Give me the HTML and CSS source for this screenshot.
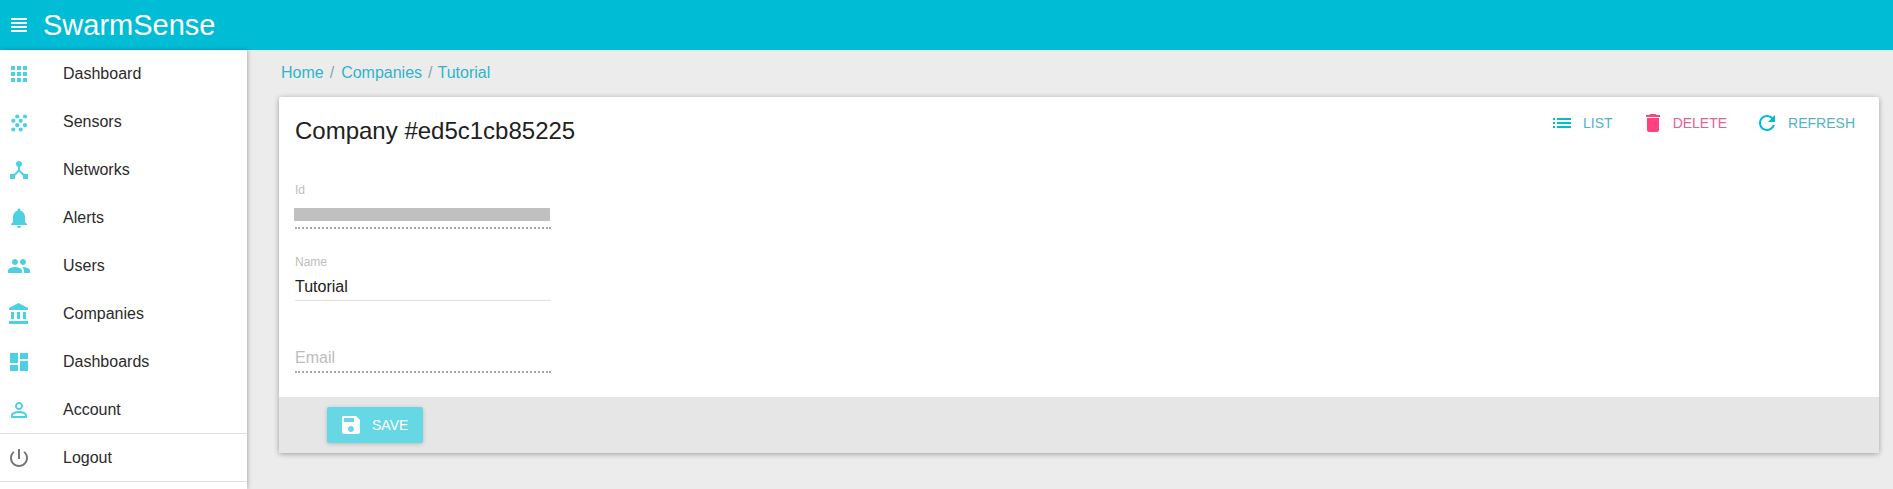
FILE: index.html
```html
<!DOCTYPE html>
<html lang="en">
<head>
    <meta charset="UTF-8">
    <meta name="viewport" content="width=device-width, initial-scale=1.0">
    <title>SwarmSense</title>
    <link rel="stylesheet" href="styles.css">
</head>
<body>
    <header class="app-bar">
        <svg class="icon" viewBox="0 0 24 24"><path d="M4 15h16v-2H4v2zm0 4h16v-2H4v2zm0-8h16V9H4v2zm0-6v2h16V5H4z"/></svg>
        <h1 class="brand">SwarmSense</h1>
    </header>
    <div class="layout">
        <nav class="sidebar">
            <a class="menu-item"><svg class="icon" viewBox="0 0 24 24"><path d="M4 8h4V4H4v4zm6 12h4v-4h-4v4zm-6 0h4v-4H4v4zm0-6h4v-4H4v4zm6 0h4v-4h-4v4zm6-10v4h4V4h-4zm-6 4h4V4h-4v4zm6 6h4v-4h-4v4zm0 6h4v-4h-4v4z"/></svg>Dashboard</a>
            <a class="menu-item"><svg class="icon" viewBox="0 0 24 24"><circle cx="10.3" cy="6.5" r="2.1"/><circle cx="18" cy="6.5" r="2.1"/><circle cx="6.3" cy="10.8" r="2.1"/><circle cx="13.7" cy="10.8" r="2.1"/><circle cx="10.3" cy="15.2" r="2.1"/><circle cx="18" cy="15.2" r="2.1"/><circle cx="6.3" cy="19.5" r="2.1"/><circle cx="13.7" cy="19.5" r="2.1"/></svg>Sensors</a>
            <a class="menu-item"><svg class="icon" viewBox="0 0 24 24"><path d="M17 16l-4-4V8.82C14.16 8.4 15 7.3 15 6c0-1.66-1.34-3-3-3S9 4.34 9 6c0 1.3.84 2.4 2 2.82V12l-4 4H3v5h5v-3.05l4-4.2 4 4.2V21h5v-5h-4z"/></svg>Networks</a>
            <a class="menu-item"><svg class="icon" viewBox="0 0 24 24"><path d="M12 22c1.1 0 2-.9 2-2h-4c0 1.1.89 2 2 2zm6-6v-5c0-3.07-1.64-5.64-4.5-6.32V4c0-.83-.67-1.5-1.5-1.5s-1.5.67-1.5 1.5v.68C7.63 5.36 6 7.92 6 11v5l-2 2v1h16v-1l-2-2z"/></svg>Alerts</a>
            <a class="menu-item"><svg class="icon" viewBox="0 0 24 24"><path d="M16 11c1.66 0 2.99-1.34 2.99-3S17.66 5 16 5c-1.66 0-3 1.34-3 3s1.34 3 3 3zm-8 0c1.66 0 2.99-1.34 2.99-3S9.66 5 8 5C6.34 5 5 6.34 5 8s1.34 3 3 3zm0 2c-2.33 0-7 1.17-7 3.5V19h14v-2.5c0-2.33-4.67-3.5-7-3.5zm8 0c-.29 0-.62.02-.97.05 1.16.84 1.97 1.97 1.97 3.45V19h6v-2.5c0-2.33-4.67-3.5-7-3.5z"/></svg>Users</a>
            <a class="menu-item"><svg class="icon" viewBox="0 0 24 24"><path d="M4 10v7h3v-7H4zm6 0v7h3v-7h-3zM2 22h19v-3H2v3zm14-12v7h3v-7h-3zm-4.5-9L2 6v2h19V6l-9.5-5z"/></svg>Companies</a>
            <a class="menu-item"><svg class="icon" viewBox="0 0 24 24"><path d="M3 13h8V3H3v10zm0 8h8v-6H3v6zm10 0h8V11h-8v10zm0-18v6h8V3h-8z"/></svg>Dashboards</a>
            <a class="menu-item"><svg class="icon" viewBox="0 0 24 24"><path d="M12 5.9c1.16 0 2.1.94 2.1 2.1s-.94 2.1-2.1 2.1S9.9 9.16 9.9 8s.94-2.1 2.1-2.1m0 9c2.97 0 6.1 1.46 6.1 2.1v1.1H5.9V17c0-.64 3.13-2.1 6.1-2.1M12 4C9.79 4 8 5.79 8 8s1.79 4 4 4 4-1.79 4-4-1.79-4-4-4zm0 9c-2.67 0-8 1.34-8 4v3h16v-3c0-2.66-5.33-4-8-4z"/></svg>Account</a>
            <a class="menu-item logout"><svg class="icon" viewBox="0 0 24 24"><path d="M13 3h-2v10h2V3zm4.83 2.17l-1.42 1.42C17.99 7.86 19 9.81 19 12c0 3.87-3.13 7-7 7s-7-3.13-7-7c0-2.19 1.01-4.14 2.58-5.42L6.17 5.17C4.23 6.82 3 9.26 3 12c0 4.97 4.03 9 9 9s9-4.03 9-9c0-2.74-1.23-5.18-3.17-6.83z"/></svg>Logout</a>
        </nav>
        <main class="content">
            <div class="breadcrumbs">
                <a>Home</a><span class="sep">/</span><a>Companies</a><span class="sep sep-last">/</span><a>Tutorial</a>
            </div>
            <section class="card">
                <div class="card-head">
                    <h2 class="card-title">Company #ed5c1cb85225</h2>
                    <div class="actions">
                        <a class="action"><svg class="icon" viewBox="0 0 24 24"><path d="M3 13h2v-2H3v2zm0 4h2v-2H3v2zm0-8h2V7H3v2zm4 4h14v-2H7v2zm0 4h14v-2H7v2zM7 7v2h14V7H7z"/></svg>List</a>
                        <a class="action danger"><svg class="icon" viewBox="0 0 24 24"><path d="M6 19c0 1.1.9 2 2 2h8c1.1 0 2-.9 2-2V7H6v12zM19 4h-3.5l-1-1h-5l-1 1H5v2h14V4z"/></svg>Delete</a>
                        <a class="action"><svg class="icon" viewBox="0 0 24 24"><path d="M17.65 6.35C16.2 4.9 14.21 4 12 4c-4.42 0-7.99 3.58-7.99 8s3.57 8 7.99 8c3.73 0 6.84-2.55 7.73-6h-2.08c-.82 2.33-3.04 4-5.65 4-3.31 0-6-2.69-6-6s2.69-6 6-6c1.66 0 3.14.69 4.22 1.78L13 11h7V4l-2.35 2.35z"/></svg>Refresh</a>
                    </div>
                </div>
                <form class="form">
                    <div class="field field-id">
                        <label class="field-label">Id</label>
                        <div class="redacted"></div>
                    </div>
                    <div class="field field-name">
                        <label class="field-label">Name</label>
                        <div class="field-value">Tutorial</div>
                    </div>
                    <div class="field field-email">
                        <div class="placeholder">Email</div>
                    </div>
                </form>
                <div class="toolbar">
                    <button class="save" type="button"><svg class="icon" viewBox="0 0 24 24"><path d="M17 3H5c-1.11 0-2 .9-2 2v14c0 1.1.89 2 2 2h14c1.1 0 2-.9 2-2V7l-4-4zm-5 16c-1.66 0-3-1.34-3-3s1.34-3 3-3 3 1.34 3 3-1.34 3-3 3zm3-10H5V5h10v4z"/></svg>Save</button>
                </div>
            </section>
        </main>
    </div>
</body>
</html>
```

FILE: styles.css
```css
* {
    box-sizing: border-box;
}

body {
    margin: 0;
    height: 489px;
    overflow: hidden;
    font-family: "Liberation Sans", Arial, sans-serif;
    color: #212121;
    background-color: #edecec;
}

.icon {
    display: block;
    flex: none;
    width: 24px;
    height: 24px;
    fill: currentColor;
}

.app-bar {
    display: flex;
    align-items: center;
    height: 50px;
    padding-left: 7px;
    color: white;
    background-color: #00bcd4;
}

.brand {
    margin: 0 0 0 12px;
    font-size: 29px;
    font-weight: 400;
}

.layout {
    display: flex;
    height: 439px;
}

.sidebar {
    width: 247px;
    flex: none;
    background-color: white;
    box-shadow: 1px 0 4px rgba(0, 0, 0, 0.25);
}

.menu-item {
    display: flex;
    align-items: center;
    height: 48px;
    padding-left: 7px;
    gap: 32px;
    font-size: 16px;
    color: #2b2b2b;
}

.menu-item .icon {
    color: #4dd0e1;
}

.menu-item.logout {
    height: 49px;
    margin-top: -1px;
    border-top: 1px solid #e0e0e0;
    border-bottom: 1px solid #e0e0e0;
}

.menu-item.logout .icon {
    color: #757575;
}

.content {
    flex: 1;
    padding: 0 14px 0 34px;
}

.breadcrumbs {
    display: flex;
    height: 47px;
    padding-top: 13px;
    font-size: 16px;
    line-height: 19px;
    color: #2fb4ca;
}

.sep {
    margin: 0 7px 0 6px;
    color: #7fa8b0;
}

.sep-last {
    margin: 0 5px 0 6px;
}

.card {
    margin-left: -2px;
    height: 356px;
    display: flex;
    flex-direction: column;
    background-color: white;
    border-radius: 2px;
    box-shadow: 0 1px 6px rgba(0, 0, 0, 0.2), 0 1px 4px rgba(0, 0, 0, 0.15);
}

.card-head {
    display: flex;
    justify-content: space-between;
    height: 71px;
    padding: 20px 24px 0 16px;
}

.card-title {
    margin: 0;
    font-size: 24px;
    font-weight: 400;
    line-height: 28px;
}

.actions {
    display: flex;
    gap: 28px;
    margin-top: -12px;
    height: 36px;
}

.action {
    display: flex;
    align-items: center;
    gap: 9px;
    font-size: 14px;
    text-transform: uppercase;
    color: #4fb4c6;
}

.action .icon {
    color: #00bcd4;
}

.action.danger {
    gap: 8px;
    color: #e8609a;
}

.action.danger .icon {
    color: #ff4081;
}

.form {
    flex: 1;
    padding: 0 16px;
}

.field {
    width: 256px;
}

.field-label {
    display: block;
    font-size: 12px;
    line-height: 14px;
    color: #bdbdbd;
}

.field-id {
    height: 61px;
    padding-top: 15px;
    border-bottom: 2px dotted #a8a8a8;
}

.redacted {
    width: 256px;
    height: 13px;
    margin: 11px 0 0 -1px;
    background-color: #c0c0c0;
}

.field-name {
    height: 72px;
    padding-top: 26px;
    border-bottom: 1px solid #e0e0e0;
}

.field-value {
    margin-top: 8px;
    font-size: 16px;
    line-height: 19px;
}

.field-email {
    height: 72px;
    padding-top: 47px;
    border-bottom: 2px dotted #a8a8a8;
}

.placeholder {
    font-size: 16px;
    line-height: 19px;
    color: #bdbdbd;
}

.toolbar {
    height: 56px;
    padding: 10px 0 0 48px;
    background-color: #e6e6e6;
}

.save {
    display: flex;
    align-items: center;
    gap: 9px;
    width: 96px;
    height: 36px;
    padding: 0 0 0 12px;
    border: none;
    border-radius: 2px;
    font-family: "Liberation Sans", Arial, sans-serif;
    font-size: 14px;
    text-transform: uppercase;
    color: white;
    background-color: #66d7e5;
    box-shadow: 0 1px 4px rgba(0, 0, 0, 0.2);
}
```
